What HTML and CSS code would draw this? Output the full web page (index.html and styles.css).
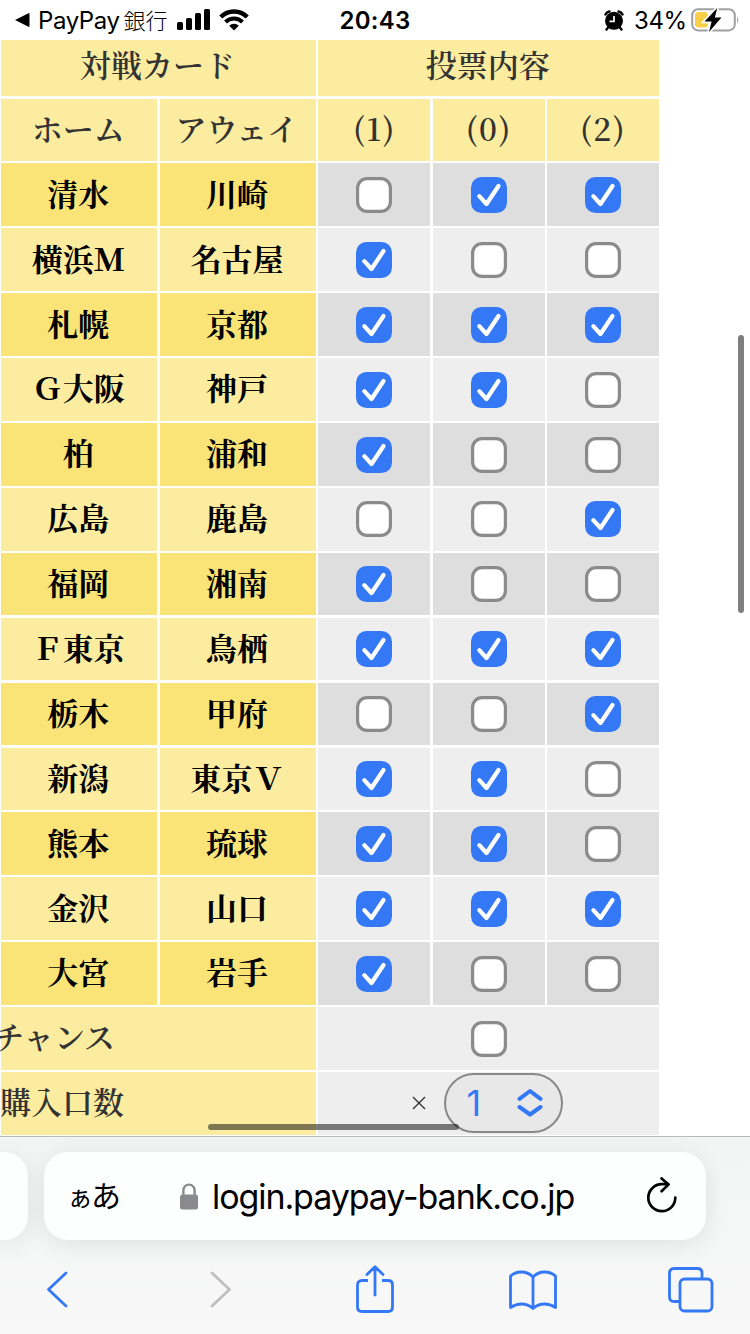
FILE: index.html
```html
<!DOCTYPE html>
<html lang="ja">
<head>
  <meta charset="UTF-8">
  <meta name="viewport" content="width=device-width, initial-scale=1">
  <title>投票内容</title>
  <link rel="stylesheet" href="styles.css">
</head>
<body>

  <svg width="0" height="0" class="defs">
    <symbol id="on" viewBox="0 0 36 36">
      <rect width="36" height="36" rx="10.5" fill="#3478f6"/>
      <path d="M8.3 19.2 L15.5 27 L27.5 9" fill="none" stroke="#fff" stroke-width="4.2" stroke-linecap="round" stroke-linejoin="round"/>
    </symbol>
    <symbol id="off" viewBox="0 0 36 36">
      <rect x="1.6" y="1.6" width="32.8" height="32.8" rx="9.5" fill="#fff" stroke="#8b8b8b" stroke-width="3.2"/>
    </symbol>
  </svg>

  <!-- ステータスバー -->
  <header class="status">
    <div class="status-left">
      <svg width="16" height="16" viewBox="0 0 16 16"><path d="M1 8 L14.5 1.2 Q15.5 .8 15.5 2 V14 Q15.5 15.2 14.5 14.8 Z"/></svg>
      <span class="back-app">PayPay</span><span class="back-bank">銀行</span>
      <svg class="signal" width="34" height="22" viewBox="0 0 34 22">
        <rect x="0" y="13" width="6" height="8" rx="1.5"/>
        <rect x="9" y="9" width="6" height="12" rx="1.5"/>
        <rect x="18" y="4" width="6" height="17" rx="1.5"/>
        <rect x="27" y="0" width="6" height="21" rx="1.5"/>
      </svg>
      <svg class="wifi" width="30" height="22" viewBox="0 0 30 22">
        <path d="M1.8 8 A18.5 18.5 0 0 1 28.2 8" fill="none" stroke="#000" stroke-width="4.4"/>
        <path d="M6.5 13 A11.8 11.8 0 0 1 23.5 13" fill="none" stroke="#000" stroke-width="4"/>
        <path d="M15 21.5 L10.2 16.8 A6.8 6.8 0 0 1 19.8 16.8 Z"/>
      </svg>
    </div>
    <div class="clock">20:43</div>
    <div class="status-right">
      <svg width="20" height="21" viewBox="0 0 20 21">
        <path d="M4.5 17 L2.5 19.5 M15.5 17 L17.5 19.5 M1.5 4.5 Q2.5 2 5.5 1.5 M18.5 4.5 Q17.5 2 14.5 1.5" fill="none" stroke="#000" stroke-width="2.4" stroke-linecap="round"/>
        <circle cx="10" cy="10.8" r="9"/>
        <path d="M10 6 V11.3 H5.5" fill="none" stroke="#fff" stroke-width="1.7"/>
      </svg>
      <span class="percent">34%</span>
      <svg width="49" height="26" viewBox="0 0 49 26">
        <rect x="1.2" y="2.2" width="42.6" height="21.2" rx="6" fill="none" stroke="#a0a0a0" stroke-width="2"/>
        <path d="M46.2 9 Q48.6 12.8 46.2 16.5 Z" fill="#a0a0a0"/>
        <rect x="4" y="5" width="13" height="15.6" rx="3.5" fill="#f7ce46"/>
        <path d="M26.3 1 L13.5 14.6 H20.6 L18 25 L30.5 10.6 H23.8 Z" stroke="#fff" stroke-width="3.4" paint-order="stroke"/>
      </svg>
    </div>
  </header>

  <!-- 投票テーブル -->
  <main class="page">
    <div class="toto" id="toto">
      <div class="head span2 top">対戦カード</div>
      <div class="head span3 top">投票内容</div>
      <div class="head">ホーム</div>
      <div class="head">アウェイ</div>
      <div class="head num">(1)</div>
      <div class="head num">(0)</div>
      <div class="head num">(2)</div>
    </div>
    <div class="toto foot">
      <div class="head span2 left chance">チャンス</div>
      <div class="pick span3"><svg class="box"><use href="#off"/></svg></div>
      <div class="head span2 left units-label">購入口数</div>
      <div class="pick span3 units">
        <svg class="times" width="14" height="14" viewBox="0 0 14 14"><path d="M1 1 L13 13 M13 1 L1 13" stroke="#333" stroke-width="1.4"/></svg>
        <div class="select">
          <span>1</span>
          <svg width="26" height="30" viewBox="0 0 26 30"><path d="M2.5 10.8 L13 3 L23.5 10.8 M2.5 19 L13 26.5 L23.5 19" fill="none" stroke="#3478f6" stroke-width="4" stroke-linecap="round" stroke-linejoin="round"/></svg>
        </div>
      </div>
    </div>
    <div class="scroll-y"></div>
    <div class="scroll-x"></div>
  </main>

  <!-- Safari のツールバー -->
  <footer class="safari">
    <div class="tabs">
      <div class="prev-tab"></div>
      <div class="address">
        <span class="aa"><small>ぁ</small>あ</span>
        <svg class="lock" width="18" height="27" viewBox="0 0 18 27">
          <rect x="0" y="11.5" width="18" height="15" rx="2.5" fill="#8a8a8e"/>
          <path d="M3.4 12 V7.2 A5.6 5.6 0 0 1 14.6 7.2 V12" fill="none" stroke="#8a8a8e" stroke-width="2.4"/>
        </svg>
        <span class="url">login.paypay-bank.co.jp</span>
        <svg class="reload" width="32" height="38" viewBox="0 0 32 38">
          <path d="M29.3 20.5 A13.5 13.5 0 1 1 15.8 7.2 H22" fill="none" stroke="#000" stroke-width="2.7" stroke-linecap="round"/>
          <path d="M15.6 1.4 L22.6 7.4 L15.6 14.3" fill="none" stroke="#000" stroke-width="2.7" stroke-linecap="round" stroke-linejoin="round"/>
        </svg>
      </div>
    </div>
    <nav class="tools">
      <svg width="24" height="40" viewBox="0 0 24 40"><path d="M20 3 L2.5 19.5 L20 36" class="line"/></svg>
      <svg width="24" height="40" viewBox="0 0 24 40"><path d="M4 3 L21.5 19.5 L4 36" class="line gray"/></svg>
      <svg width="40" height="50" viewBox="0 0 40 50">
        <path d="M13 15.5 H7 Q2.5 15.5 2.5 20 V42 Q2.5 46.5 7 46.5 H33 Q37.5 46.5 37.5 42 V20 Q37.5 15.5 33 15.5 H27" class="line butt"/>
        <path d="M20 30 V2 M12 9.5 L20 1.7 L28 9.5" class="line"/>
      </svg>
      <svg width="50" height="42" viewBox="0 0 50 42">
        <path d="M25 8 Q20 3 13.5 3 Q7 3 2.5 7 V38.5 Q8 35 13.5 35 Q20 35 25 39.5 Q30 35 36.5 35 Q42 35 47.5 38.5 V7 Q43 3 36.5 3 Q30 3 25 8 V39" class="line"/>
      </svg>
      <svg width="46" height="46" viewBox="0 0 46 46">
        <rect x="12" y="12" width="32" height="32" rx="4.5" class="line"/>
        <path d="M11 34.5 H6 Q1.5 34.5 1.5 30 V6 Q1.5 1.5 6 1.5 H29.5 Q34 1.5 34 6 V11" class="line butt"/>
      </svg>
    </nav>
  </footer>

  <script>
    const games = [
      ['清水', '川崎', '011'],
      ['横浜Ｍ', '名古屋', '100'],
      ['札幌', '京都', '111'],
      ['Ｇ大阪', '神戸', '110'],
      ['柏', '浦和', '100'],
      ['広島', '鹿島', '001'],
      ['福岡', '湘南', '100'],
      ['Ｆ東京', '鳥栖', '111'],
      ['栃木', '甲府', '001'],
      ['新潟', '東京Ｖ', '110'],
      ['熊本', '琉球', '110'],
      ['金沢', '山口', '111'],
      ['大宮', '岩手', '100']
    ];

    let html = '';
    games.forEach(([home, away, picks], i) => {
      const dark = i % 2 === 0 ? ' dark' : '';
      html += `<div class="team${dark}">${home}</div><div class="team${dark}">${away}</div>`;
      for (const p of picks) {
        html += `<div class="pick${dark}"><svg class="box"><use href="#${p === '1' ? 'on' : 'off'}"/></svg></div>`;
      }
    });
    document.getElementById('toto').insertAdjacentHTML('beforeend', html);
  </script>

</body>
</html>
```
FILE: styles.css
```css
* { margin: 0; padding: 0; box-sizing: border-box; }

body {
  width: 750px;
  height: 1334px;
  overflow: hidden;
  background: #fff;
  font-family: Inter, "Noto Sans CJK JP", sans-serif;
  color: #000;
}

svg { display: block; flex: none; }
.defs { position: absolute; }

/* ステータスバー */
.status {
  height: 40px;
  display: grid;
  grid-template-columns: 1fr 80px 1fr;
  align-items: center;
}

.status-left, .status-right {
  display: flex;
  align-items: center;
  height: 40px;
}

.status-left { padding-left: 14px; }
.back-app { font-size: 24px; margin-left: 8px; letter-spacing: -0.4px; }
.back-bank {
  font-family: "Noto Sans CJK JP", sans-serif;
  font-size: 22px;
  font-weight: 300;
  line-height: 40px;
  margin: -3px 0 0 4px;
}
.signal { margin-left: 9px; }
.wifi { margin-left: 8px; }

.clock {
  font-size: 24px;
  font-weight: 600;
  text-align: center;
  letter-spacing: 0.3px;
}

.status-right { justify-content: flex-end; padding-right: 10px; }
.percent { font-size: 24px; margin: 0 5px 0 10px; width: 52px; letter-spacing: -0.4px; white-space: nowrap; }

/* 投票テーブル */
.page {
  position: relative;
  height: 1096px;
  overflow: hidden;
}

.toto {
  display: grid;
  grid-template-columns: 156.5px 156.5px 112px 112px 112px;
  grid-template-rows: 56.3px;
  grid-auto-rows: 62.6px;
  gap: 2.3px;
  padding-left: 0.9px;
  width: 660px;
  font-family: "Noto Serif CJK JP", "Liberation Serif", "Noto Sans CJK JP", serif;
  font-size: 31px;
}

.foot {
  grid-template-rows: none;
  margin-top: 2.3px;
}

.toto > div {
  display: flex;
  align-items: center;
  justify-content: center;
  line-height: 40px;
  white-space: nowrap;
}

.head, .team { background: #fbeca0; font-weight: 600; }
.toto > .head, .toto > .team { padding: 0 2px 4px 0; }
.head { color: #333; }
.toto > .top { padding-bottom: 9px; }
.toto > .left { justify-content: flex-start; }
.toto > .chance { text-indent: -8px; }
.units-label { text-indent: -1px; }
.num { letter-spacing: 1.5px; text-indent: 2px; }
.span2 { grid-column: span 2; }
.span3 { grid-column: span 3; }

.team { font-weight: 700; }
.team.dark { background: #fae478; }
.pick { background: #eee; }
.pick.dark { background: #dedede; }
.toto > .pick { padding-top: 0.4px; }
.box { width: 36px; height: 36px; }

.toto > .units { justify-content: flex-start; padding-left: 94px; }

.select {
  display: flex;
  align-items: center;
  justify-content: space-between;
  width: 119px;
  height: 60px;
  margin-left: 18px;
  padding: 0 18px 0 20px;
  border: 2px solid #888;
  border-radius: 30px;
  background: #e8e8e8;
  color: #3478f6;
  font-family: Inter, sans-serif;
  font-size: 36px;
}

/* スクロールバー */
.scroll-y, .scroll-x {
  position: absolute;
  border-radius: 3px;
  background: rgba(0, 0, 0, 0.5);
}
.scroll-y { right: 6px; top: 295px; width: 6px; height: 278px; }
.scroll-x { left: 208px; top: 1084px; width: 251px; height: 6px; }

/* ツールバー */
.safari {
  height: 198px;
  border-top: 1px solid #b8bbbb;
  background: linear-gradient(#f3f4f4, #f8f8f8);
}

.tabs {
  display: flex;
  gap: 16px;
  padding-top: 15px;
}

.prev-tab, .address {
  height: 88px;
  background: #fdfefe;
  box-shadow: 0 4px 24px rgba(0, 0, 0, 0.09);
}

.prev-tab { width: 28px; border-radius: 0 24px 24px 0; }

.address {
  width: 662px;
  border-radius: 24px;
  display: flex;
  align-items: center;
  padding: 0 28px 0 23px;
}

.aa {
  width: 50px;
  padding-top: 2px;
  font-size: 30px;
  letter-spacing: -2px;
  line-height: 40px;
  white-space: nowrap;
}
.aa small { font-size: 26px; }
.lock { margin-left: 63px; }
.url { font-size: 34px; margin-left: 14px; letter-spacing: -1.08px; white-space: nowrap; }
.reload { margin-left: auto; }

.tools {
  display: grid;
  grid-template-columns: 162px 147px 153px 160px 46px;
  align-items: center;
  height: 50px;
  margin-top: 25px;
  padding-left: 46px;
}

.line {
  fill: none;
  stroke: #3478f6;
  stroke-width: 2.8;
  stroke-linecap: round;
  stroke-linejoin: round;
}
.line.butt { stroke-linecap: butt; }
.line.gray { stroke: #bfbfbf; }
```
